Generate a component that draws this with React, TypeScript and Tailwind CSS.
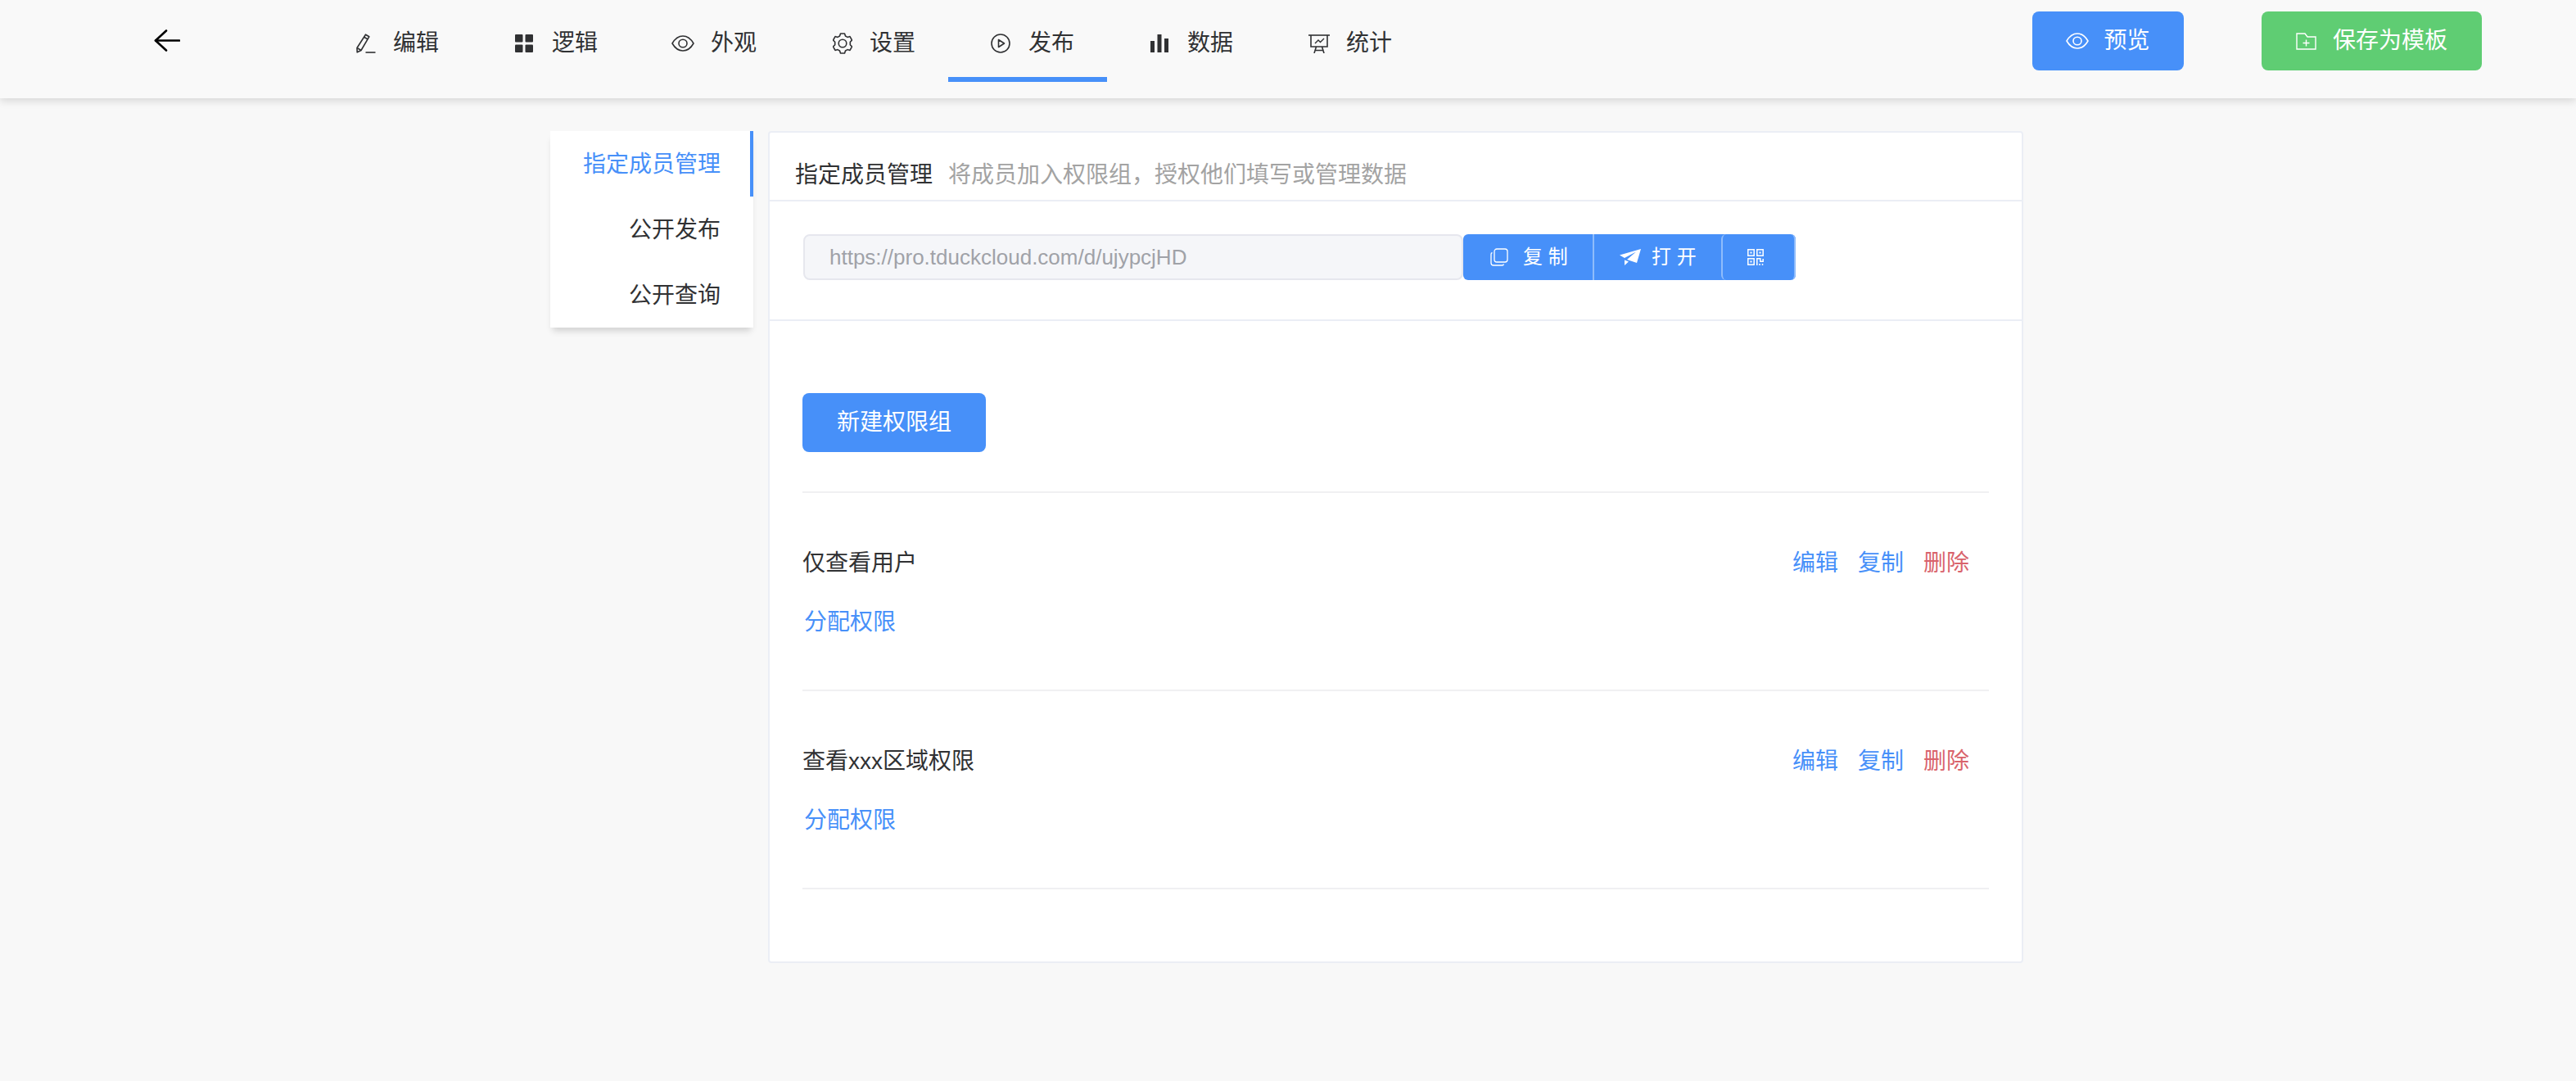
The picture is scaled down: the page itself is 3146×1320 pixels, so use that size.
import React from 'react';

const FONT = '"Liberation Sans", "Noto Sans CJK SC", sans-serif';

type IconProps = { className?: string };

const BackIcon = ({ className }: IconProps) => (
  <svg viewBox="0 0 32 27" className={className} fill="none" stroke="currentColor" strokeWidth="2.6" strokeLinecap="round" strokeLinejoin="round">
    <path d="M15 1.500 2 13.500l13 12" />
    <path d="M2 13.500h29" />
  </svg>
);

const PencilIcon = ({ className }: IconProps) => (
  <svg viewBox="0 0 24 24" className={className} fill="none" stroke="currentColor" strokeWidth="1.6">
    <path d="M11.5 1.2 15.8 3.8 6 20.5 1.2 22.8 1 17.5Z" strokeLinejoin="round" />
    <path d="M9.6 4.2 13.9 6.8" />
    <path d="M1.4 17.7 5.8 20.3" />
    <path d="M11.5 23h12" />
  </svg>
);

const GridIcon = ({ className }: IconProps) => (
  <svg viewBox="0 0 22 22" className={className} fill="currentColor">
    <rect x="0" y="0" width="9.5" height="9.5" rx="1" />
    <rect x="12.5" y="0" width="9.5" height="9.5" rx="1" />
    <rect x="0" y="12.5" width="9.5" height="9.5" rx="1" />
    <rect x="12.5" y="12.5" width="9.5" height="9.5" rx="1" />
  </svg>
);

const EyeIcon = ({ className }: IconProps) => (
  <svg viewBox="0 0 28 20" className={className} fill="none" stroke="currentColor" strokeWidth="1.6">
    <path d="M1 10C4.5 4 9 1 14 1s9.500 3 13 9c-3.500 6-8 9-13 9S4.500 16 1 10Z" strokeLinejoin="round" />
    <ellipse cx="14" cy="10" rx="5" ry="4.800" />
  </svg>
);

const GearIcon = ({ className }: IconProps) => (
  <svg viewBox="0 0 24 26" className={className} fill="none" stroke="currentColor" strokeWidth="1.6" strokeLinejoin="round">
    <path d="M9.500 1h5l1 3 2.500 1.400 3-.8 2.500 4.400-2.200 2.300v3.400l2.200 2.300-2.500 4.400-3-.8-2.500 1.400-1 3h-5l-1-3L6 20.600l-3 .8L.5 17l2.200-2.300v-3.400L.5 9 3 4.600l3 .8 2.500-1.400Z" />
    <circle cx="12" cy="13" r="4.800" />
  </svg>
);

const PlayIcon = ({ className }: IconProps) => (
  <svg viewBox="0 0 24 24" className={className} fill="none" stroke="currentColor" strokeWidth="1.6">
    <circle cx="12" cy="12" r="11" />
    <path d="M9.500 7.500v9l7-4.500Z" strokeLinejoin="round" />
  </svg>
);

const BarsIcon = ({ className }: IconProps) => (
  <svg viewBox="0 0 22 22" className={className} fill="currentColor">
    <rect x="0" y="8" width="5" height="14" />
    <rect x="8.500" y="0" width="5" height="22" />
    <rect x="17" y="5" width="5" height="17" />
  </svg>
);

const BoardIcon = ({ className }: IconProps) => (
  <svg viewBox="0 0 26 23" className={className} fill="none" stroke="currentColor" strokeWidth="1.6">
    <path d="M0 1h26" />
    <path d="M3 1v14h20V1" />
    <path d="M8 11l4-4 2.500 2.500L19 5" strokeWidth="1.400" />
    <path d="M9.500 15 7 23M16.500 15 19 23M8 19.500h10" />
  </svg>
);

const FolderPlusIcon = ({ className }: IconProps) => (
  <svg viewBox="0 0 25 21" className={className} fill="none" stroke="currentColor" strokeWidth="1.400">
    <path d="M1 1h10l3 4h10v15H1Z" />
    <path d="M12.500 8.500v8M8.500 12.500h8" />
  </svg>
);

const CopyIcon = ({ className }: IconProps) => (
  <svg viewBox="0 0 22 22" className={className} fill="none" stroke="currentColor" strokeWidth="1.300">
    <rect x="5" y="1" width="16" height="16" rx="3" />
    <path d="M2.500 5.500A2 2 0 0 0 1 7.500V18a3 3 0 0 0 3 3h10.500a2 2 0 0 0 2-1.500" />
  </svg>
);

const SendIcon = ({ className }: IconProps) => (
  <svg viewBox="0 0 26 20" className={className} fill="currentColor">
    <path d="M26 0 0 7.500l6 3.500L20 3.500 9 13l12 4Z" />
    <path d="M6 13.500V20l5-4.500Z" />
  </svg>
);

const QrIcon = ({ className }: IconProps) => (
  <svg viewBox="0 0 20 20" className={className} fill="none" stroke="currentColor" strokeWidth="1.500">
    <rect x=".8" y=".8" width="7.400" height="7.400" />
    <rect x="11.800" y=".8" width="7.400" height="7.400" />
    <rect x=".8" y="11.800" width="7.400" height="7.400" />
    <path d="M3.500 3.500h2v2h-2zM14.500 3.500h2v2h-2zM3.500 14.500h2v2h-2z" fill="currentColor" stroke="none" />
    <path d="M11.800 20v-8.200h4v3.500h3.400V12M15 20v-2M18.500 20v-2" />
  </svg>
);

const navItems = [
  { label: '编辑', icon: PencilIcon, iconClass: 'w-[24px] h-[24px]' },
  { label: '逻辑', icon: GridIcon, iconClass: 'w-[22px] h-[22px]' },
  { label: '外观', icon: EyeIcon, iconClass: 'w-[28px] h-[20px] -ml-[3px]' },
  { label: '设置', icon: GearIcon, iconClass: 'w-[24px] h-[26px]' },
  { label: '发布', icon: PlayIcon, iconClass: 'w-[24px] h-[24px] -ml-[1px]', active: true },
  { label: '数据', icon: BarsIcon, iconClass: 'w-[22px] h-[22px]' },
  { label: '统计', icon: BoardIcon, iconClass: 'w-[26px] h-[23px] -ml-[1px]' },
];

const groups = ['仅查看用户', '查看xxx区域权限'];

function Header() {
  return (
    <header className="h-[120px] flex items-start bg-[#f9f9f9] shadow-[0_3px_10px_rgba(0,0,0,0.14)] relative">
      <div className="w-[382px] pl-[188px] pt-[36px] shrink-0">
        <BackIcon className="w-[32px] h-[27px] text-black" />
      </div>
      <nav className="flex h-[100px]">
        {navItems.map((item) => {
          const Icon = item.icon;
          return (
            <div
              key={item.label}
              className={
                item.active
                  ? 'w-[194px] pt-[12px] pl-[53px] flex items-center border-b-[6px] border-[#4790f9] text-[#303133]'
                  : 'w-[194px] pt-[12px] pl-[53px] flex items-center border-b-[6px] border-transparent text-[#303133]'
              }
            >
              <div className="w-[45px] shrink-0">
                <Icon className={item.iconClass} />
              </div>
              <span className="text-[28px] leading-[44px] whitespace-nowrap">{item.label}</span>
            </div>
          );
        })}
      </nav>
      <div className="ml-[742px] mt-[14px] flex gap-[95px]">
        <button className="w-[185px] h-[72px] rounded-[8px] bg-[#4790f9] text-white text-[28px] flex items-center justify-center gap-[18px]">
          <EyeIcon className="w-[28px] h-[20px]" />
          预览
        </button>
        <button className="w-[269px] h-[72px] rounded-[8px] bg-[#5fcd73] text-white text-[28px] flex items-center justify-center gap-[20px]">
          <FolderPlusIcon className="w-[25px] h-[21px]" />
          保存为模板
        </button>
      </div>
    </header>
  );
}

function SideMenu() {
  return (
    <aside className="w-[248px] h-[240px] shrink-0 bg-white shadow-[0_7px_8px_-3px_rgba(0,0,0,0.16)] text-[28px] text-right text-[#303133]">
      <div className="h-[80px] pr-[36px] leading-[82px] text-[#4790f9] border-r-[4px] border-[#4790f9]">指定成员管理</div>
      <div className="h-[80px] pr-[40px] leading-[82px]">公开发布</div>
      <div className="h-[80px] pr-[40px] leading-[82px]">公开查询</div>
    </aside>
  );
}

function LinkBar() {
  return (
    <div className="h-[146px] pl-[41px] pt-[40px] flex items-start border-b-2 border-[#ebeef5]">
      <div className="w-[806px] h-[56px] pl-[30px] flex items-center bg-[#f5f6f9] border-2 border-[#e6e7ee] rounded-[8px] text-[26px] text-[#a0a2a8]">
        https://pro.tduckcloud.com/d/ujypcjHD
      </div>
      <div className="h-[56px] w-[406px] flex bg-[#4790f9] rounded-[6px] text-white text-[24px] whitespace-pre">
        <button className="w-[158px] flex items-center pl-[33px] gap-[18px]">
          <CopyIcon className="w-[22px] h-[22px]" />
          <span>复 制</span>
        </button>
        <button className="w-[157px] flex items-center pl-[31px] gap-[13px] border-l-2 border-[#8fbcfb]">
          <SendIcon className="w-[26px] h-[20px]" />
          <span>打 开</span>
        </button>
        <button className="flex-1 flex items-center pl-[30px] border-l-2 border-r-2 border-[#8fbcfb] rounded-[6px]">
          <QrIcon className="w-[20px] h-[20px]" />
        </button>
      </div>
    </div>
  );
}

function GroupRow({ name }: { name: string }) {
  return (
    <div className="h-[242px] pt-[62px] border-b-2 border-[#f0f0f2]">
      <div className="flex justify-between pr-[24px] leading-[48px]">
        <span className="text-[#303133]">{name}</span>
        <div className="flex gap-[24px]">
          <span className="text-[#4790f9]">编辑</span>
          <span className="text-[#4790f9]">复制</span>
          <span className="text-[#d9636b]">删除</span>
        </div>
      </div>
      <div className="mt-[24px] pl-[2px] leading-[48px] text-[#4790f9]">分配权限</div>
    </div>
  );
}

export default function App() {
  return (
    <div className="min-h-[1320px] bg-[#f8f8f8] text-[28px]" style={{ fontFamily: FONT }}>
      <Header />
      <main className="flex pt-[40px] pl-[672px] gap-[18px]">
        <SideMenu />
        <section className="w-[1533px] h-[1016px] bg-white border-2 border-[#ebeef5] rounded-[4px]">
          <div className="h-[84px] pl-[31px] pt-[22px] flex items-center gap-[19px] border-b-2 border-[#ebeef5]">
            <span className="text-[#303133]">指定成员管理</span>
            <span className="text-[#a3a3a3]">将成员加入权限组，授权他们填写或管理数据</span>
          </div>
          <LinkBar />
          <div className="pl-[40px] pr-[40px]">
            <div className="h-[210px] pt-[88px] border-b-2 border-[#f0f0f2]">
              <button className="w-[224px] h-[72px] rounded-[8px] bg-[#4790f9] text-white">新建权限组</button>
            </div>
            {groups.map((g) => (
              <GroupRow key={g} name={g} />
            ))}
          </div>
        </section>
      </main>
    </div>
  );
}
